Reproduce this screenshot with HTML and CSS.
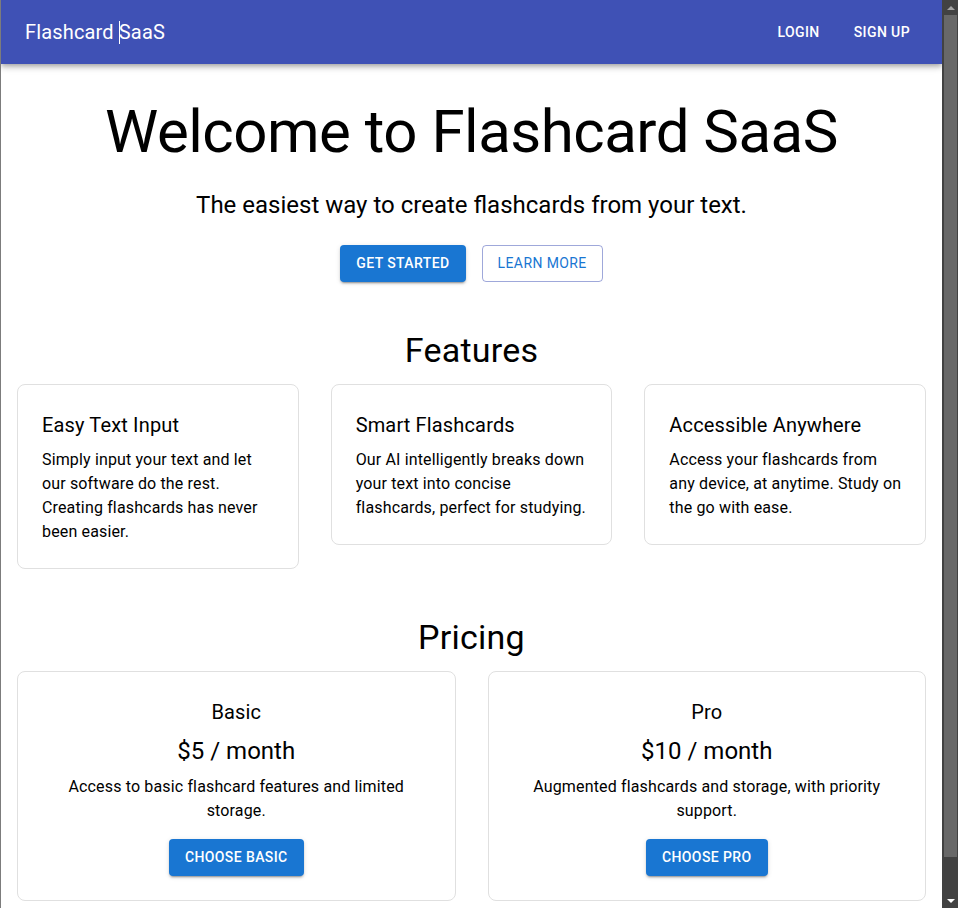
FILE: index.html
```html
<!DOCTYPE html>
<html lang="en">
<head>
<meta charset="utf-8">
<title>Flashcard SaaS</title>
<link rel="stylesheet" href="styles.css">
</head>
<body>
<header class="appbar">
  <div class="toolbar">
    <div class="brand">Flashcard <span class="caret"></span>SaaS</div>
    <nav class="nav">
      <a class="nav-btn" href="#">Login</a>
      <a class="nav-btn" href="#">Sign Up</a>
    </nav>
  </div>
</header>
<main class="container">
  <section class="hero">
    <h1 class="hero-title">Welcome to Flashcard SaaS</h1>
    <p class="hero-sub">The easiest way to create flashcards from your text.</p>
    <div class="hero-actions">
      <a class="btn btn-contained" href="#">Get Started</a>
      <a class="btn btn-outlined" href="#">Learn More</a>
    </div>
  </section>

  <section class="section">
    <h2 class="section-title">Features</h2>
    <div class="features">
      <div class="card feature-card">
        <h3 class="card-title">Easy Text Input</h3>
        <p class="card-text">Simply input your text and let our software do the rest. Creating flashcards has never been easier.</p>
      </div>
      <div class="card feature-card">
        <h3 class="card-title">Smart Flashcards</h3>
        <p class="card-text">Our AI intelligently breaks down your text into concise flashcards, perfect for studying.</p>
      </div>
      <div class="card feature-card">
        <h3 class="card-title">Accessible Anywhere</h3>
        <p class="card-text">Access your flashcards from any device, at anytime. Study on the go with ease.</p>
      </div>
    </div>
  </section>

  <section class="section">
    <h2 class="section-title">Pricing</h2>
    <div class="pricing">
      <div class="card price-card">
        <h3 class="card-title">Basic</h3>
        <p class="price">$5 / month</p>
        <p class="card-text">Access to basic flashcard features and limited storage.</p>
        <div class="price-action"><a class="btn btn-contained" href="#">Choose Basic</a></div>
      </div>
      <div class="card price-card">
        <h3 class="card-title">Pro</h3>
        <p class="price">$10 / month</p>
        <p class="card-text">Augmented flashcards and storage, with priority support.</p>
        <div class="price-action"><a class="btn btn-contained" href="#">Choose Pro</a></div>
      </div>
    </div>
  </section>
</main>
<div class="scrollbar" aria-hidden="true">
  <div class="sb-arrow sb-up"></div>
  <div class="sb-thumb"></div>
  <div class="sb-arrow sb-down"></div>
</div>
</body>
</html>
```

FILE: styles.css
```css
html {
  background: #ffffff;
}
* { box-sizing: border-box; }
body {
  margin: 0 16px 0 0;
  background: #ffffff;
  border-left: 1px solid #7c7c7c;
  font-family: Roboto, "Liberation Sans", sans-serif;
  color: #000000;
}
a { text-decoration: none; }

.appbar {
  background: #3f51b5;
  color: #ffffff;
  box-shadow: 0 2px 4px -1px rgba(0,0,0,0.2), 0 4px 5px 0 rgba(0,0,0,0.14), 0 1px 10px 0 rgba(0,0,0,0.12);
  position: relative;
  z-index: 2;
}
.toolbar {
  height: 64px;
  padding: 0 24px;
  display: flex;
  align-items: center;
}
.brand {
  flex: 1;
  font-size: 20px;
  font-weight: 400;
  line-height: 1.6;
  letter-spacing: 0.0075em;
}
.caret {
  display: inline-block;
  width: 0;
  height: 23px;
  border-left: 1px solid #ffffff;
  vertical-align: -5px;
  margin-right: -1px;
}
.nav {
  display: flex;
  gap: 18px;
}
.nav-btn {
  color: #ffffff;
  font-size: 14px;
  font-weight: 500;
  line-height: 1.75;
  letter-spacing: 0.02857em;
  text-transform: uppercase;
  padding: 6px 8px;
  border-radius: 4px;
}

.container {
  padding: 0 16px;
}
.hero {
  text-align: center;
  margin: 32px 0;
}
.hero-title {
  margin: 0 0 21px;
  font-size: 60px;
  font-weight: 400;
  line-height: 1.2;
  letter-spacing: -0.00833em;
}
.hero-sub {
  margin: 0;
  padding-bottom: 8.4px;
  font-size: 24px;
  font-weight: 400;
  line-height: 1.334;
}
.hero-actions {
  padding-top: 16px;
  display: flex;
  justify-content: center;
  gap: 16px;
}
.btn {
  display: inline-block;
  font-size: 14px;
  font-weight: 500;
  line-height: 1.75;
  letter-spacing: 0.02857em;
  text-transform: uppercase;
  border-radius: 4px;
}
.btn-contained {
  background: #1976d2;
  color: #ffffff;
  padding: 6px 16px;
  box-shadow: 0 3px 1px -2px rgba(0,0,0,0.2), 0 2px 2px 0 rgba(0,0,0,0.14), 0 1px 5px 0 rgba(0,0,0,0.12);
}
.btn-outlined {
  color: #1976d2;
  font-weight: 400;
  padding: 5px 15px;
  border: 1px solid rgba(63, 81, 181, 0.5);
}

.section {
  margin: 48px 0;
}
.section-title {
  text-align: center;
  margin: 0 0 11.9px;
  font-size: 34px;
  font-weight: 400;
  line-height: 1.235;
  letter-spacing: 0.00735em;
}
.features {
  display: grid;
  grid-template-columns: repeat(3, 1fr);
  column-gap: 32px;
  align-items: start;
}
.pricing {
  display: grid;
  grid-template-columns: repeat(2, 1fr);
  column-gap: 32px;
  align-items: start;
}
.card {
  border: 1px solid #e0e0e0;
  border-radius: 8px;
  padding: 24px;
  background: #ffffff;
}
.feature-card {
  padding-right: 21px;
}
.card-title {
  margin: 0 0 7px;
  font-size: 20px;
  font-weight: 400;
  line-height: 1.6;
  letter-spacing: 0.0075em;
}
.card-text {
  margin: 0;
  font-size: 16px;
  line-height: 1.5;
  letter-spacing: 0.00938em;
}
.price-card {
  text-align: center;
}
.price {
  margin: 0 0 8.4px;
  font-size: 24px;
  line-height: 1.334;
}
.price-action {
  padding-top: 16px;
}

.scrollbar {
  position: fixed;
  top: 0;
  right: 0;
  bottom: 0;
  width: 16px;
  background: #424242;
  display: flex;
  flex-direction: column;
  z-index: 10;
}
.sb-arrow {
  height: 15px;
  width: 100%;
  padding-left: 1px;
  display: flex;
  align-items: center;
  justify-content: center;
  flex: none;
}
.sb-up::before {
  content: "";
  border-left: 4px solid transparent;
  border-right: 4px solid transparent;
  border-bottom: 4px solid #a3a3a3;
}
.sb-down::before {
  content: "";
  border-left: 4px solid transparent;
  border-right: 4px solid transparent;
  border-top: 4px solid #ffffff;
}
.sb-thumb {
  margin: 0 1px 0 2px;
  height: 842px;
  flex: none;
  background: #686868;
}
.sb-down {
  margin-top: auto;
}
```
